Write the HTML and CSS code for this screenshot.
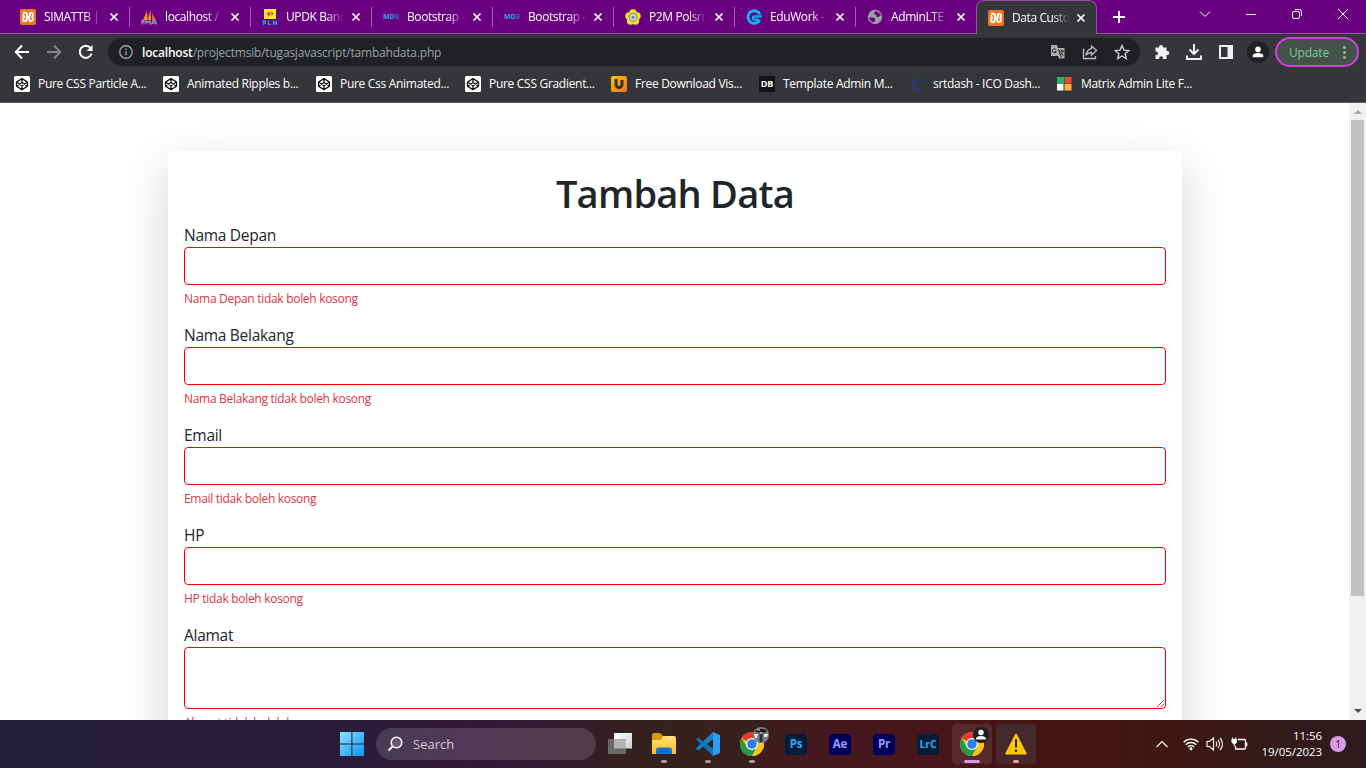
FILE: index.html
```html
<!DOCTYPE html>
<html lang="id">
<head>
<meta charset="utf-8">
<title>Data Customer</title>
<link rel="stylesheet" href="styles.css">
</head>
<body>
<svg class="defs" width="0" height="0">
  <defs>
    <linearGradient id="win" x1="0" y1="0" x2="1" y2="1"><stop offset="0" stop-color="#8be1ff"/><stop offset="1" stop-color="#0a95f5"/></linearGradient>
    <linearGradient id="uplab" x1="0" y1="0" x2="1" y2="1"><stop offset="0" stop-color="#ffc400"/><stop offset="1" stop-color="#f2702a"/></linearGradient>
    <linearGradient id="fold" x1="0" y1="0" x2="0" y2="1"><stop offset="0" stop-color="#ffe27a"/><stop offset="1" stop-color="#fbbf1c"/></linearGradient>
    <linearGradient id="task" x1="0" y1="0" x2="1" y2="1"><stop offset="0" stop-color="#fff"/><stop offset="1" stop-color="#d0d0d0"/></linearGradient>
  </defs>
  <symbol id="x" viewBox="0 0 10 10"><path d="M1.5 1.5l7 7M8.5 1.5l-7 7" stroke="#fff" stroke-width="1.7"/></symbol>
  <symbol id="xampp" viewBox="0 0 16 16"><rect width="16" height="16" rx="2" fill="#ee7422"/><path d="M3 3.800h2.500Q7 3.800 7 5.500V6.300Q7 8 8.500 8Q9.800 8 9.800 6.500V5.500Q9.800 3.800 11.300 3.800T12.800 5.500V6.500Q12.800 8 11.500 8Q13 8.300 13 10T11 12.200Q9.300 12.200 9.300 10.300Q9.300 8 8 8Q6.700 8 6.700 10.300Q6.700 12.200 5 12.200T3 10Q3 8.300 5 8Q3.200 7.500 3.200 5" fill="none" stroke="#fff" stroke-width="1.900"/></symbol>
  <symbol id="codepen" viewBox="0 0 16 16"><rect width="16" height="16" rx="1.500" fill="#fff"/><path d="M8 2.600L13.500 6v4.200L8 13.600L2.500 10.200V6zM2.500 6L8 9.700 13.500 6M2.500 10.200L8 6.500l5.500 3.700M8 2.600v3.900M8 9.700v3.900" fill="none" stroke="#111" stroke-width="1.300" stroke-linejoin="round"/></symbol>
  <symbol id="chrome" viewBox="0 0 24 24"><circle cx="12" cy="12" r="12" fill="#fbc116"/><path d="M12 12L1.600 6A12 12 0 0 1 22.400 6z" fill="#e33b2e"/><path d="M1.600 6A12 12 0 0 0 12 24l5.200-9L12 12 6.800 15z" fill="#269a47"/><path d="M12 6h10.400A12 12 0 0 1 12 24l5.200-9z" fill="#fbc116"/><circle cx="12" cy="12" r="6" fill="#fff"/><circle cx="12" cy="12" r="4.800" fill="#2f7de9"/></symbol>
</svg>

<header class="browser">
  <div class="tabstrip">
    <div class="tab"><svg class="fav"><use href="#xampp"/></svg><span class="title">SIMATTB |</span><svg class="close"><use href="#x"/></svg></div>
    <div class="tab"><svg class="fav" viewBox="0 0 16 16"><path d="M2 11L6 2v9zM7 11L9.500.5 10 11z" fill="#f39a1e"/><path d="M6 11l1-8 1 8zM11 11V4l4 7z" fill="#e06a20"/><path d="M1 15.500v-4h2v2H1M5 15.500v-4l2 2 2-2v4M10.500 15.500l1.500-4h2l1.500 4M11 14h4" fill="none" stroke="#9a95a8" stroke-width="1.300"/></svg><span class="title">localhost /</span><svg class="close"><use href="#x"/></svg></div>
    <div class="tab"><svg class="fav" viewBox="0 0 16 16"><rect x="2" width="12" height="10" fill="#f4ee1d"/><path d="M7 2L4.500 5.500h2L5.500 8 9 5 8 5zM10 2L8.500 4.500h1.500L9 7.500 12 4h-1.500z" fill="#e4312b"/><path d="M1.500 16v-4h2v2h-2M6.500 11.500v4h2.500M11.500 16v-4l3 3.500v-4" fill="none" stroke="#0fa8d4" stroke-width="1.300"/></svg><span class="title">UPDK Band</span><svg class="close"><use href="#x"/></svg></div>
    <div class="tab"><span class="fav mdb">MD<i>B</i></span><span class="title">Bootstrap 4</span><svg class="close"><use href="#x"/></svg></div>
    <div class="tab"><span class="fav mdb">MD<i>B</i></span><span class="title">Bootstrap 4</span><svg class="close"><use href="#x"/></svg></div>
    <div class="tab"><svg class="fav" viewBox="0 0 16 16"><g fill="#f1e624"><circle cx="8" cy="4" r="3.800"/><circle cx="4" cy="7" r="3.700"/><circle cx="12" cy="7" r="3.700"/><circle cx="5.500" cy="12" r="3.700"/><circle cx="10.500" cy="12" r="3.700"/></g><circle cx="8" cy="8.300" r="4" fill="#f6d77c" stroke="#6e9bc0" stroke-width="1.300"/><circle cx="8" cy="8.300" r="1.600" fill="#4f91cf"/></svg><span class="title">P2M Polsri</span><svg class="close"><use href="#x"/></svg></div>
    <div class="tab"><svg class="fav" viewBox="0 0 16 16"><path d="M14 5.500A6.300 6.300 0 1 0 13.800 11" fill="none" stroke="#0cb2f5" stroke-width="3"/><path d="M16 7.300H8.500a1.700 1.700 0 0 0 0 3.400H13" fill="none" stroke="#0cb2f5" stroke-width="2.200"/></svg><span class="title">EduWork -</span><svg class="close"><use href="#x"/></svg></div>
    <div class="tab last"><svg class="fav" viewBox="0 0 16 16"><circle cx="8" cy="8" r="7.200" fill="#9aa0a6"/><path d="M2.200 8.500h4.500L8.500 10.500 7 13.500Q3 13 2.200 8.500zM8 2.200L7 5l2.500 1L9 7.500l2.500.5 2.300-1.500Q12.500 2.500 8 2.200z" fill="#68007f"/></svg><span class="title">AdminLTE 3</span><svg class="close"><use href="#x"/></svg></div>
    <div class="tab active"><svg class="fav"><use href="#xampp"/></svg><span class="title">Data Custo</span><svg class="close"><use href="#x"/></svg></div>
    <svg class="newtab" viewBox="0 0 12 12"><path d="M6 0v12M0 6h12" stroke="#fff" stroke-width="2"/></svg>
    <div class="wincontrols">
      <svg viewBox="0 0 12 12"><path d="M1 3.500l5 5 5-5"/></svg>
      <svg viewBox="0 0 12 12"><path d="M1 6.500h10"/></svg>
      <svg viewBox="0 0 12 12"><rect x="1.500" y="3.500" width="7" height="7" rx="1.500"/><path d="M4 1.500h4.500a2 2 0 0 1 2 2V8"/></svg>
      <svg viewBox="0 0 12 12"><path d="M1 1l10 10M11 1L1 11"/></svg>
    </div>
  </div>

  <div class="toolbar">
    <div class="nav">
      <svg viewBox="0 0 16 16"><path d="M15 8H2M8 1.500L1.800 8 8 14.500" stroke="#fff"/></svg>
      <svg viewBox="0 0 16 16"><path d="M1 8h13M8 1.500L14.200 8 8 14.500" stroke="#85868a"/></svg>
      <svg viewBox="0 0 16 16"><path d="M13.600 9.500A6 6 0 1 1 12.500 4" stroke="#fff"/><path d="M14.500 1v6h-6z" fill="#fff" stroke="none"/></svg>
    </div>
    <div class="omnibox">
      <svg class="info" viewBox="0 0 14 14"><circle cx="7" cy="7" r="6.200"/><path d="M7 6.200v4M7 3.400v1.500"/></svg>
      <span class="url"><b>localhost</b>/projectmsib/tugasjavascript/tambahdata.php</span>
      <div class="actions">
        <svg viewBox="0 0 16 16"><path d="M1 1h6l1 3h6.500v10.500H9L8 12H1z" fill="#aaa"/><path d="M6 5.500a2 2 0 1 0 .3 2H4.500M8.500 5.500l3 8M9 7h5M11.500 6v1M13 7c-.5 2-2 3.500-3 4M10.500 8.500l3 3" fill="none" stroke="#292a2e"/></svg>
        <svg viewBox="0 0 16 16"><path d="M2.500 5.500h-1v9h12V12M9.500 2l5 4.500-5 4.500V8.500C7 8.500 5 9.500 4 11.500c0-3 2-6.500 5.500-7z" fill="none" stroke="#bbb" stroke-width="1.300"/></svg>
        <svg viewBox="0 0 16 16"><path d="M8 1.500l1.900 4.600 4.900.4-3.700 3.200 1.100 4.800L8 12l-4.200 2.500 1.100-4.800L1.200 6.500l4.900-.4z" fill="none" stroke="#ccc" stroke-width="1.400"/></svg>
      </div>
    </div>
    <div class="tools">
      <svg viewBox="0 0 16 16"><path d="M1.500 3.500H5V3a2 2 0 0 1 4 0v.5h3.500V7h.8a2 2 0 0 1 0 4h-.8v4H9v-.8a1.900 1.900 0 0 0-3.800 0v.8H1.500v-3.800h.6a1.900 1.900 0 0 0 0-3.800h-.6z" fill="#f1f1f3"/></svg>
      <svg viewBox="0 0 16 16"><path d="M8 0v9M3.500 5.500L8 10l4.500-4.500M1 11.500V15h14v-3.500" fill="none" stroke="#f1f1f3" stroke-width="2"/></svg>
      <svg viewBox="0 0 16 16"><path d="M2 2h12v12H2z" fill="none" stroke="#f1f1f3" stroke-width="2"/><path d="M9.500 2H14v12H9.500z" fill="#f1f1f3"/></svg>
      <span class="avatar"><svg viewBox="0 0 16 16"><circle cx="8" cy="5" r="3.200" fill="#fff"/><path d="M2 14v-2c0-4 12-4 12 0v2z" fill="#fff"/></svg></span>
    </div>
    <div class="update"><span>Update</span><i></i></div>
  </div>

  <nav class="bookmarks">
    <a><svg class="fav"><use href="#codepen"/></svg><span>Pure CSS Particle A...</span></a>
    <a><svg class="fav"><use href="#codepen"/></svg><span>Animated Ripples b...</span></a>
    <a><svg class="fav"><use href="#codepen"/></svg><span>Pure Css Animated...</span></a>
    <a><svg class="fav"><use href="#codepen"/></svg><span>Pure CSS Gradient...</span></a>
    <a><svg class="fav" viewBox="0 0 16 16"><rect width="16" height="16" rx="2" fill="url(#uplab)"/><path d="M3.500 3v5.500a4.500 4.500 0 0 0 9 0V4H9.500V8.500a1.500 1.500 0 0 1-3 0V3z" fill="#37302b"/></svg><span>Free Download Vis...</span></a>
    <a><span class="fav db">DB</span><span>Template Admin M...</span></a>
    <a><svg class="fav" viewBox="0 0 16 16"><path d="M12 5A4.600 4.600 0 1 0 12 11.500" fill="none" stroke="#183f9e" stroke-width="1.500"/></svg><span>srtdash - ICO Dash...</span></a>
    <a><svg class="fav" viewBox="0 0 16 16"><path d="M0 1h7v7H0z" fill="#21b573"/><path d="M7.500 1h7v6.500H7.500z" fill="#e5502a"/><path d="M0 8h6.500v6.500H0z" fill="#fff"/><path d="M7.500 8h7v6.500H7.500z" fill="#fcb53b"/></svg><span>Matrix Admin Lite F...</span></a>
  </nav>
</header>

<div class="viewport">
  <main class="page">
    <form class="card">
      <h1>Tambah Data</h1>
      <div class="group"><label>Nama Depan</label><input type="text"><small>Nama Depan tidak boleh kosong</small></div>
      <div class="group"><label>Nama Belakang</label><input type="text"><small>Nama Belakang tidak boleh kosong</small></div>
      <div class="group"><label>Email</label><input type="text"><small>Email tidak boleh kosong</small></div>
      <div class="group"><label>HP</label><input type="text"><small>HP tidak boleh kosong</small></div>
      <div class="group"><label>Alamat</label><textarea></textarea><small>Alamat tidak boleh kosong</small></div>
    </form>
  </main>
  <aside class="scrollbar">
    <svg viewBox="0 0 8 4"><path d="M0 4h8L4 0z" fill="#a3a3a3"/></svg>
    <div class="thumb"></div>
    <svg viewBox="0 0 8 4"><path d="M0 0h8L4 4z" fill="#505050"/></svg>
  </aside>
</div>

<footer class="taskbar">
  <div class="app start"><svg width="24" height="24" viewBox="0 0 24 24"><path d="M0 0h11.400v11.400H0zM12.400 0H24v11.400H12.400zM0 12.400h11.400V24H0zM12.400 12.400H24V24H12.400z" fill="url(#win)"/></svg></div>
  <div class="search"><svg viewBox="0 0 16 16"><circle cx="9.500" cy="6.500" r="5.300" fill="#6a5670" stroke="#fff" stroke-width="1.500"/><path d="M5.700 10.300L1.500 14.500" stroke="#fff" stroke-width="1.900"/></svg><span>Search</span></div>
  <div class="app"><svg width="24" height="24" viewBox="0 0 24 24"><path d="M6 1h18v15.500H6z" fill="url(#task)"/><path d="M0 7h18v15H0z" fill="#6b6868"/><path d="M6 7h12v9.500H6z" fill="#b4b2b2"/></svg></div>
  <div class="app run"><svg width="24" height="24" viewBox="0 0 24 24"><path d="M0 3a2 2 0 0 1 2-2h6l3 3v5H0z" fill="#d99a0b"/><path d="M0 8l9 0 2-4h11a2 2 0 0 1 2 2v16H0z" fill="url(#fold)"/><path d="M4 22v-4a2.500 2.500 0 0 1 2.500-2.500h11A2.500 2.500 0 0 1 20 18v4z" fill="#1377cf"/><path d="M8 19h8" stroke="#064c91"/></svg></div>
  <div class="app run"><svg width="24" height="24" viewBox="0 0 24 24"><path d="M17 0L3.500 13 0 16.500l2 2L18 6.500z" fill="#1684d3"/><path d="M17 24L0 7.500l2-2L18 17.500z" fill="#0874bd"/><path d="M17 0l7 3v18l-7 3z" fill="#29a0ef"/></svg></div>
  <div class="app run"><svg width="24" height="24"><use href="#chrome"/></svg><svg class="badge" viewBox="0 0 16 16"><circle cx="8" cy="8" r="8" fill="#77807d"/><path d="M2 4c4-3 8-3 12 0l-2 1.500H4z" fill="#161b18"/><path d="M1 7l4 0-1 4-2 0zM11 7l4 0-1 3-3 0zM4 2.500h3v1H4z" fill="#e6e8e8"/><path d="M6.500 6h3v9h-3z" fill="#222c43"/><circle cx="8" cy="6" r="1.300" fill="#c99d80"/></svg></div>
  <div class="app"><span class="adobe ps">Ps</span></div>
  <div class="app"><span class="adobe">Ae</span></div>
  <div class="app"><span class="adobe">Pr</span></div>
  <div class="app"><span class="adobe lr">LrC</span></div>
  <div class="app run focus"><svg width="24" height="24"><use href="#chrome"/></svg><svg class="badge" viewBox="0 0 16 16"><circle cx="8" cy="8" r="8" fill="#1e1f22"/><circle cx="8" cy="5.500" r="2.700" fill="#fff"/><path d="M3 12.500v-1c0-3.500 10-3.500 10 0v1z" fill="#fff"/></svg></div>
  <div class="app run alert"><svg width="24" height="24" viewBox="0 0 24 24"><path d="M11 2.500q1-1.500 2 0L22.500 21q.5 1.500-1 1.500h-19q-1.500 0-1-1.500z" fill="#ffc60c"/><path d="M12 7v8.500" stroke="#222" stroke-width="2"/><circle cx="12" cy="18.800" r="1.300" fill="#222"/></svg></div>
  <div class="tray">
    <svg width="12" height="12" viewBox="0 0 12 12"><path d="M.5 9L6 3.500 11.500 9"/></svg>
    <svg class="wifi" width="16" height="16" viewBox="0 0 16 16"><path d="M.7 6.200a10.300 10.300 0 0 1 14.600 0M2.700 8.700a7.500 7.500 0 0 1 10.600 0M4.900 11a4.400 4.400 0 0 1 6.200 0" stroke-width="1.300"/><circle cx="8" cy="12.800" r="1" fill="#fff"/></svg>
    <svg class="vol" width="17" height="16" viewBox="0 0 17 16"><path d="M1 5.500h2.500L7.500 2v12l-4-3.500H1zM9.700 5.700a3 3 0 0 1 0 4.600M11.800 3.800a6 6 0 0 1 0 8.400M14 2a8.500 8.500 0 0 1 0 12"/></svg>
    <svg width="17" height="16" viewBox="0 0 17 16"><path d="M7 3.500h6.500a1 1 0 0 1 1 1v7.500a1 1 0 0 1-1 1h-9V10M15.700 6.500v3.500" stroke-width="1.300"/><path d="M1 3.500h4.500v2.500L4 7.500H2.500L1 6zM1.700 1.500v2M4.800 1.500v2M3.300 7.500V10" fill="#fff"/></svg>
    <div class="clock">11:56<br>19/05/2023</div>
    <span class="count">1</span>
  </div>
</footer>
</body>
</html>
```
FILE: styles.css
```css
* { box-sizing: border-box; }
body {
  margin: 0;
  width: 1366px;
  height: 768px;
  overflow: hidden;
  display: flex;
  flex-direction: column;
  font-family: "Open Sans", "Noto Sans", sans-serif;
  background: #fff;
}
svg { display: block; flex: none; }
.defs { position: absolute; }

.browser { height: 103px; background: #35363a; border-bottom: 1px solid #5b5c60; color: #fff; font-size: 12px; flex: none; }
.tabstrip { display: flex; height: 34px; padding-left: 9px; background: #68007f; box-shadow: inset 0 -1px #9650a5; }
.tab { width: 121px; height: 34px; padding: 0 10px 0 11px; display: flex; align-items: center; position: relative; flex: none; }
.tab::after { content: ""; position: absolute; right: 0; top: 7px; width: 1px; height: 20px; background: #a45eb2; }
.tab.last::after { display: none; }
.tab.active { width: 121px; margin-left: -1px; padding: 0 9px 0 11px; background: #35363a; border: 1px solid #9650a5; border-bottom: 0; border-radius: 8px 8px 0 0; }
.tab.active::after { display: none; }
.fav { width: 16px; height: 16px; flex: none; }
.title { width: 62px; margin-left: 8px; white-space: nowrap; line-height: 20px; letter-spacing: -.4px; -webkit-mask-image: linear-gradient(90deg, #000 65%, transparent 94%); mask-image: linear-gradient(90deg, #000 65%, transparent 94%); }
.close { width: 10px; height: 10px; margin-left: 3px; }
.active .close { margin-left: 2px; }
.mdb { font: bold 7px/16px "Open Sans", sans-serif; color: #2ea5e8; letter-spacing: 0; }
.mdb i { font-style: normal; color: #3c58b8; }
.newtab { width: 12px; height: 12px; margin: 11px 0 0 16px; }
.wincontrols { display: flex; gap: 34px; margin: 8px 0 0 74px; }
.wincontrols svg { width: 12px; height: 12px; fill: none; stroke: #fff; stroke-width: 1; }

.toolbar { height: 36px; display: flex; align-items: center; padding: 0 7px 0 14px; }
.nav { display: flex; gap: 16px; width: 94px; }
.nav svg { width: 16px; height: 16px; fill: none; stroke-width: 2; }
.omnibox { width: 1032px; height: 28px; border-radius: 14px; background: #202124; display: flex; align-items: center; padding: 0 10px 0 11px; flex: none; }
.info { width: 14px; height: 14px; fill: none; stroke: #9aa0a6; stroke-width: 1.4; }
.url { margin-left: 9px; flex: 1; color: #9aa0a6; letter-spacing: -.2px; }
.url b { color: #fff; font-weight: 600; }
.actions { display: flex; gap: 16px; }
.actions svg { width: 16px; height: 16px; }
.tools { display: flex; align-items: center; gap: 16px; margin-left: 14px; flex: none; }
.tools svg { width: 16px; height: 16px; }
.avatar { width: 22px; height: 22px; margin-left: -3px; border-radius: 50%; background: #202124; display: flex; align-items: center; justify-content: center; }
.avatar svg { width: 14px; height: 14px; }
.update { width: 84px; height: 30px; margin-left: auto; border: 2px solid #d33fe0; border-radius: 15px; background: #45524c; color: #7fc995; display: flex; align-items: center; justify-content: space-between; padding: 0 11px 0 12px; font-size: 12px; letter-spacing: -.2px; flex: none; }
.update i { width: 3px; height: 3px; border-radius: 50%; background: #81c995; box-shadow: 0 -5px #81c995, 0 5px #81c995; }

.bookmarks { height: 28px; display: grid; grid-template-columns: 149px 153px 149px 146px 148px 150px 148px 170px; padding-left: 14px; align-items: center; }
.bookmarks a { display: flex; align-items: center; gap: 8px; white-space: nowrap; letter-spacing: -.3px; }
.bookmarks a > span:last-child { padding-bottom: 2px; }
.db { background: #141414; font: bold 9px/16px "Open Sans", sans-serif; text-align: center; letter-spacing: 0; }

.viewport { height: 617px; display: flex; overflow: hidden; flex: none; }
.page { flex: 1; padding: 48px 167px 0 168px; overflow: hidden; }
.card { height: 760px; padding: 16px; border-radius: 4px; background: #fff; box-shadow: 0 16px 48px rgba(0, 0, 0, .175); color: #212529; }
h1 { margin: 0 0 8px; padding-top: 2px; height: 48px; font-size: 38px; line-height: 48px; letter-spacing: -.75px; font-weight: 600; text-align: center; }
.group { height: 100px; display: flex; flex-direction: column; }
label { height: 24px; font-size: 15.500px; line-height: 24px; letter-spacing: -.28px; }
input, textarea { width: 100%; height: 38px; margin: 0; border: 1px solid #f00; border-radius: 4px; background: #fff; flex: none; }
textarea { height: 62px; }
small { margin-top: 4px; font-size: 12px; line-height: 20px; letter-spacing: -.3px; color: #dc3545; }
.scrollbar { width: 17px; background: #f1f1f1; display: flex; flex-direction: column; align-items: center; padding: 7px 0; }
.scrollbar svg { width: 8px; height: 4px; }
.thumb { width: 13px; height: 476px; margin: 6px 0 auto; background: #c1c1c1; flex: none; }

.taskbar { height: 48px; padding-left: 330px; display: flex; align-items: center; color: #fff; flex: none; background: linear-gradient(90deg, #25203a 0, #291b3b 26%, #35183b 34%, #371a30 40%, #34221f 47%, #39201f 54%, #461820 60%, #481519 70%, #44160f 80%, #3d1711 87%, #321a1d 94%, #311b20); }
.app { width: 44px; height: 48px; display: flex; align-items: center; justify-content: center; position: relative; flex: none; }
.start { padding-right: 1px; }
.search { width: 220px; height: 32px; margin: 0 2px; padding-left: 11px; border-radius: 16px; display: flex; align-items: center; gap: 10px; background: rgba(255, 255, 255, .14); font-size: 13px; color: #d7ccd6; flex: none; }
.search svg { width: 16px; height: 16px; }
.run::after { content: ""; position: absolute; bottom: 5px; left: 19px; width: 6px; height: 3px; border-radius: 2px; background: #a29a9b; }
.focus, .alert { width: 40px; height: 40px; margin: 0 2px; border-radius: 4px; background: rgba(255, 255, 255, .09); }
.alert { background: #45292c; }
.focus::after { left: 12px; bottom: 1px; width: 16px; background: #d99be6; }
.alert::after { left: 17px; bottom: 1px; background: #f49aa3; }
.badge { position: absolute; width: 16px; height: 16px; right: 5px; top: 7px; }
.focus .badge { right: 3px; top: 3px; }
.adobe { width: 22px; height: 21px; border-radius: 4px; background: #00005b; color: #9999ff; font-size: 11.500px; line-height: 20px; font-weight: 700; text-align: center; letter-spacing: -.2px; }
.ps { background: #001e36; color: #31a8ff; }
.lr { background: #001e36; color: #31a8ff; font-size: 10.500px; }
.tray { margin-left: auto; padding-right: 20px; display: flex; align-items: center; }
.tray svg { fill: none; stroke: #fff; stroke-width: 1.100; }
.wifi { margin-left: 15px; }
.vol { margin: 0 8px 0 7px; }
.clock { width: 74px; text-align: right; font-size: 11.500px; line-height: 16px; letter-spacing: -.05px; }
.count { width: 16px; height: 16px; margin-left: 8px; border-radius: 50%; background: #d99be6; color: #37203a; font-size: 10px; line-height: 16px; text-align: center; }
```
